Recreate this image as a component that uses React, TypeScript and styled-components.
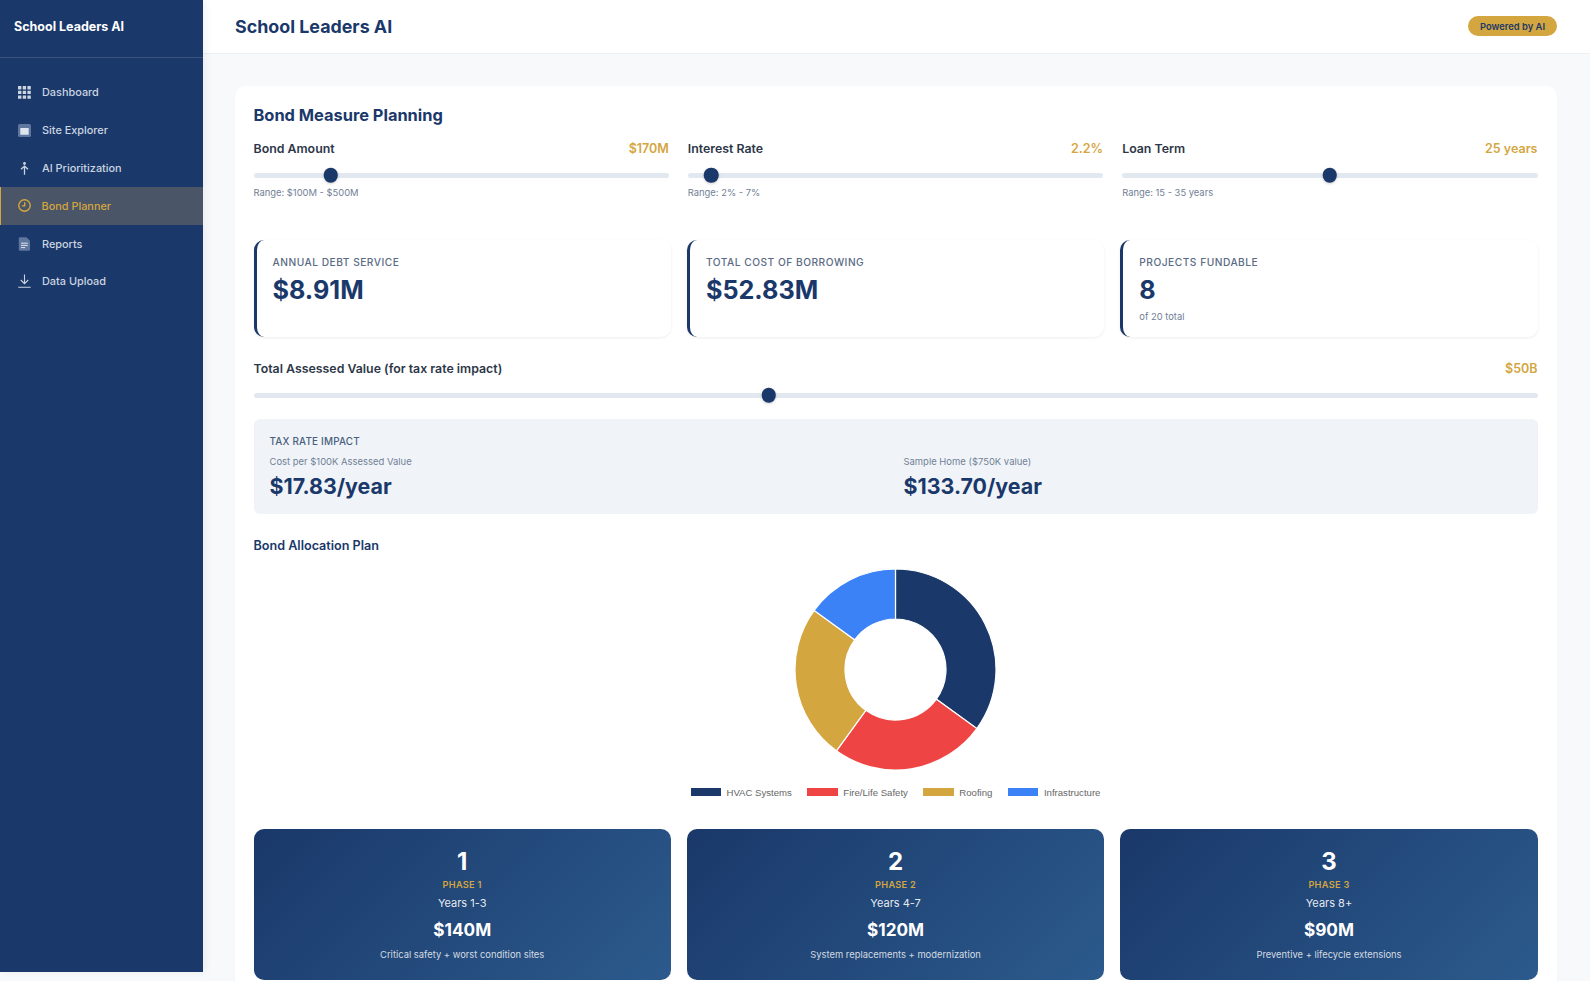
import React from "react";
import styled, { createGlobalStyle } from "styled-components";

const navy = "#1a386a";
const gold = "#d4a63f";

const Global = createGlobalStyle`
  html, body { margin: 0; padding: 0; height: 981px; overflow: hidden; background: #f7f9fb; }
  body { font-family: Inter, "Liberation Sans", sans-serif; -webkit-font-smoothing: antialiased; }
  * { box-sizing: border-box; }
`;

const Shell = styled.div`
  display: flex;
  width: 1590px;
  height: 981px;
  overflow: hidden;
  align-items: flex-start;
`;

const Sidebar = styled.aside`
  flex: 0 0 203px;
  height: 971.5px;
  background: ${navy};
  box-shadow: 2px 0 8px rgba(0, 0, 0, 0.06);
  position: relative;
  z-index: 2;
`;

const Logo = styled.div`
  height: 58px;
  padding: 0 14px 5px;
  display: flex;
  align-items: center;
  color: #fff;
  font-size: 12.5px;
  font-weight: 700;
  border-bottom: 1px solid rgba(255, 255, 255, 0.14);
`;

const Nav = styled.nav`
  padding-top: 15.6px;
  display: flex;
  flex-direction: column;
`;

const NavItem = styled.div<{ $active?: boolean }>`
  height: 37.8px;
  display: flex;
  align-items: center;
  gap: 11px;
  padding-left: ${(p) => (p.$active ? "16.5px" : "18px")};
  border-left: ${(p) => (p.$active ? `1.5px solid ${gold}` : "none")};
  background: ${(p) => (p.$active ? "#4a5568" : "transparent")};
  color: ${(p) => (p.$active ? gold : "#cbd5e0")};
  font-size: 10.9px;
  font-weight: 500;
  svg { flex: 0 0 13px; }
`;

const Main = styled.div`
  flex: 1;
  min-width: 0;
  height: 981px;
  overflow: hidden;
`;

const Header = styled.header`
  height: 54px;
  background: #fff;
  border-bottom: 1.5px solid #edf0f4;
  padding: 0 33px 0 32px;
  display: flex;
  align-items: center;
  justify-content: space-between;
`;

const HeaderTitle = styled.h1`
  margin: 0;
  color: ${navy};
  font-size: 17.85px;
  font-weight: 700;
`;

const Badge = styled.div`
  width: 89px;
  height: 20.5px;
  margin-top: -1px;
  border-radius: 11px;
  background: ${gold};
  color: ${navy};
  font-size: 9.4px;
  font-weight: 600;
  display: flex;
  align-items: center;
  justify-content: center;
`;

const Content = styled.main`
  padding: 32px 33.5px 0 31.5px;
`;

const Card = styled.section`
  background: #fff;
  border-radius: 10px;
  padding: 18px 19px 40px;
  box-shadow: 0 1px 3px rgba(0, 0, 0, 0.04);
`;

const CardTitle = styled.h2`
  margin: 0 0 13px;
  height: 23px;
  line-height: 23px;
  color: ${navy};
  font-size: 16.4px;
  font-weight: 700;
`;

const SliderRow = styled.div`
  display: grid;
  grid-template-columns: repeat(3, 1fr);
  gap: 19px;
`;

const LabelRow = styled.div`
  display: flex;
  justify-content: space-between;
  height: 18px;
  line-height: 18px;
  font-size: 12.35px;
  font-weight: 600;
  color: #2d3748;
`;

const Value = styled.span`
  color: ${gold};
  font-weight: 600;
  font-size: 12.5px;
`;

const Track = styled.div<{ $gap: number }>`
  position: relative;
  height: 5px;
  margin-top: ${(p) => p.$gap}px;
  border-radius: 3px;
  background: #e2e8f0;
`;

const Thumb = styled.div`
  position: absolute;
  top: 50%;
  width: 14.5px;
  height: 14.5px;
  border-radius: 50%;
  background: ${navy};
  transform: translate(-50%, -50%);
  box-shadow: 0 1px 3px rgba(0, 0, 0, 0.2);
`;

const RangeText = styled.div`
  margin-top: 8px;
  height: 13px;
  line-height: 13px;
  font-size: 9.4px;
  color: #718096;
`;

const StatGrid = styled.div`
  margin-top: 41px;
  display: grid;
  grid-template-columns: repeat(3, 417.4px);
  gap: 16px;
`;

const Stat = styled.div`
  height: 97px;
  padding: 15px 16px;
  background: #fff;
  border-radius: 10px;
  border-left: 3.5px solid ${navy};
  box-shadow: 0 1px 3px rgba(0, 0, 0, 0.07);
`;

const StatLabel = styled.div`
  height: 14px;
  line-height: 14px;
  font-size: 10.2px;
  font-weight: 500;
  letter-spacing: 0.5px;
  color: #5a6b85;
`;

const StatValue = styled.div`
  margin-top: 5px;
  height: 32px;
  line-height: 32px;
  font-size: 25.2px;
  font-weight: 700;
  color: ${navy};
`;

const StatSub = styled.div`
  margin-top: 4px;
  height: 13px;
  line-height: 13px;
  font-size: 9.4px;
  color: #718096;
`;

const AssessedBlock = styled.div`
  margin-top: 23px;
`;

const TaxBox = styled.div`
  margin-top: 21.5px;
  height: 95px;
  padding: 16px;
  border-radius: 6px;
  background: #f0f4f8;
`;

const TaxTitle = styled.div`
  height: 13px;
  line-height: 13px;
  font-size: 9.9px;
  font-weight: 500;
  letter-spacing: 0.2px;
  color: #4a5f7d;
`;

const TaxGrid = styled.div`
  margin-top: 7px;
  display: grid;
  grid-template-columns: 1fr 1fr;
  gap: 16px;
`;

const TaxLabel = styled.div`
  height: 13px;
  line-height: 13px;
  font-size: 9.45px;
  color: #718096;
`;

const TaxValue = styled.div`
  margin-top: 5px;
  height: 26px;
  line-height: 26px;
  font-size: 21.4px;
  font-weight: 700;
  color: ${navy};
`;

const SubHeading = styled.h3`
  margin: 24px 0 0;
  height: 16px;
  line-height: 16px;
  font-size: 12.6px;
  font-weight: 600;
  color: ${navy};
`;

const ChartBlock = styled.div`
  margin-top: 13.5px;
  display: flex;
  flex-direction: column;
  align-items: center;
`;

const Legend = styled.div`
  margin-top: 14.5px;
  display: flex;
  gap: 15.6px;
  height: 14px;
  align-items: center;
  font-family: "Liberation Sans", Arial, sans-serif;
  font-size: 9.6px;
  color: #666;
`;

const LegendItem = styled.div`
  display: flex;
  align-items: center;
  gap: 5.5px;
`;

const Swatch = styled.span<{ $color: string }>`
  width: 30.4px;
  height: 8px;
  background: ${(p) => p.$color};
`;

const PhaseGrid = styled.div`
  margin-top: 30px;
  display: grid;
  grid-template-columns: repeat(3, 417.4px);
  gap: 16px;
`;

const Phase = styled.div`
  height: 151px;
  padding-top: 17.5px;
  border-radius: 10px;
  background: linear-gradient(135deg, ${navy}, #2c5a8c);
  text-align: center;
  color: #fff;
`;

const PhaseNumber = styled.div`
  height: 30px;
  line-height: 30px;
  font-size: 24px;
  font-weight: 700;
`;

const PhaseName = styled.div`
  margin-top: 1.5px;
  height: 14px;
  line-height: 14px;
  font-size: 9.2px;
  font-weight: 600;
  letter-spacing: 0.3px;
  color: ${gold};
`;

const PhaseYears = styled.div`
  margin-top: 3px;
  height: 16px;
  line-height: 16px;
  font-size: 11px;
  color: rgba(255, 255, 255, 0.9);
`;

const PhaseAmount = styled.div`
  margin-top: 6px;
  height: 26px;
  line-height: 26px;
  font-size: 17.2px;
  font-weight: 700;
`;

const PhaseDesc = styled.div`
  margin-top: 4.5px;
  height: 14px;
  line-height: 14px;
  font-size: 9.4px;
  color: rgba(255, 255, 255, 0.8);
`;

const GridIcon = () => (
  <svg width="13" height="13" viewBox="0 0 13 13" fill="#cbd5e0">
    {[0, 4.7, 9.4].flatMap((y) =>
      [0, 4.7, 9.4].map((x) => <rect key={`${x}-${y}`} x={x} y={y} width="3.4" height="3.4" rx="0.3" />)
    )}
  </svg>
);

const SiteIcon = () => (
  <svg width="13" height="13" viewBox="0 0 13 13">
    <rect x="0" y="0" width="13" height="13" rx="1.5" fill="#5f769e" />
    <rect x="2.3" y="4" width="8.4" height="6.8" rx="0.6" fill="#dfe5ee" />
  </svg>
);

const PersonIcon = () => (
  <svg width="13" height="13" viewBox="0 0 13 13" fill="none" stroke="#cbd5e0" strokeWidth="1.3">
    <circle cx="6.5" cy="1.5" r="1.4" fill="#cbd5e0" stroke="none" />
    <path d="M6.5 3.4V12.8M3 7.2l3.5-3 3.5 3" />
  </svg>
);

const ClockIcon = () => (
  <svg width="13" height="13" viewBox="0 0 13 13" fill="none" stroke={gold} strokeWidth="1.4">
    <circle cx="6.5" cy="6.5" r="5.7" />
    <path d="M6.7 3.3V6.9H3.9" />
  </svg>
);

const ReportIcon = () => (
  <svg width="13" height="14" viewBox="0 0 13 14">
    <path d="M2 0.2H8.4L12 3.8V12.6A1.2 1.2 0 0 1 10.8 13.8H2A1.2 1.2 0 0 1 0.8 12.6V1.4A1.2 1.2 0 0 1 2 0.2Z" fill="#5f769e" />
    <path d="M3 6.2H9.8M3 8.4H9.8M3 10.6H7.2" stroke="#dfe5ee" strokeWidth="1" />
  </svg>
);

const DownloadIcon = () => (
  <svg width="13" height="14" viewBox="0 0 13 14" fill="none" stroke="#cbd5e0" strokeWidth="1.1">
    <path d="M6.5 0.4V9.6M2.8 6l3.7 3.7L10.2 6M0.3 13.2H12.7" />
  </svg>
);

const navItems: { label: string; icon: React.ReactNode; active?: boolean }[] = [
  { label: "Dashboard", icon: <GridIcon /> },
  { label: "Site Explorer", icon: <SiteIcon /> },
  { label: "AI Prioritization", icon: <PersonIcon /> },
  { label: "Bond Planner", icon: <ClockIcon />, active: true },
  { label: "Reports", icon: <ReportIcon /> },
  { label: "Data Upload", icon: <DownloadIcon /> },
];

const Slider = ({ frac, gap, inset = 7.25 }: { frac: number; gap: number; inset?: number }) => (
  <Track $gap={gap}>
    <Thumb style={{ left: `calc(${inset}px + (100% - ${inset * 2}px) * ${frac})` }} />
  </Track>
);

const sliders = [
  { label: "Bond Amount", value: "$170M", frac: 0.175, range: "Range: $100M - $500M" },
  { label: "Interest Rate", value: "2.2%", frac: 0.04, range: "Range: 2% - 7%" },
  { label: "Loan Term", value: "25 years", frac: 0.5, range: "Range: 15 - 35 years" },
];

const stats = [
  { label: "ANNUAL DEBT SERVICE", value: "$8.91M" },
  { label: "TOTAL COST OF BORROWING", value: "$52.83M" },
  { label: "PROJECTS FUNDABLE", value: "8", sub: "of 20 total" },
];

const segments = [
  { label: "HVAC Systems", color: navy, pct: 35 },
  { label: "Fire/Life Safety", color: "#ef4444", pct: 25 },
  { label: "Roofing", color: "#d4a63f", pct: 25 },
  { label: "Infrastructure", color: "#3b82f6", pct: 15 },
];

const phases = [
  { n: "1", name: "PHASE 1", years: "Years 1-3", amount: "$140M", desc: "Critical safety + worst condition sites" },
  { n: "2", name: "PHASE 2", years: "Years 4-7", amount: "$120M", desc: "System replacements + modernization" },
  { n: "3", name: "PHASE 3", years: "Years 8+", amount: "$90M", desc: "Preventive + lifecycle extensions" },
];

const polar = (r: number, pct: number) => {
  const a = (pct / 100) * Math.PI * 2;
  return [r * Math.sin(a), -r * Math.cos(a)];
};

const Donut = () => {
  let start = 0;
  const R = 100.5;
  const r = 50.5;
  return (
    <svg width="203" height="203" viewBox="-101.5 -101.5 203 203">
      {segments.map((s) => {
        const end = start + s.pct;
        const [x1, y1] = polar(R, start);
        const [x2, y2] = polar(R, end);
        const [x3, y3] = polar(r, end);
        const [x4, y4] = polar(r, start);
        const large = s.pct > 50 ? 1 : 0;
        const d = `M${x1} ${y1}A${R} ${R} 0 ${large} 1 ${x2} ${y2}L${x3} ${y3}A${r} ${r} 0 ${large} 0 ${x4} ${y4}Z`;
        start = end;
        return <path key={s.label} d={d} fill={s.color} stroke="#fff" strokeWidth="1.2" />;
      })}
    </svg>
  );
};

export default function App() {
  return (
    <Shell>
      <Global />
      <Sidebar>
        <Logo>School Leaders AI</Logo>
        <Nav>
          {navItems.map((it) => (
            <NavItem key={it.label} $active={it.active}>
              {it.icon}
              {it.label}
            </NavItem>
          ))}
        </Nav>
      </Sidebar>
      <Main>
        <Header>
          <HeaderTitle>School Leaders AI</HeaderTitle>
          <Badge>Powered by AI</Badge>
        </Header>
        <Content>
          <Card>
            <CardTitle>Bond Measure Planning</CardTitle>
            <SliderRow>
              {sliders.map((s) => (
                <div key={s.label}>
                  <LabelRow>
                    <span>{s.label}</span>
                    <Value>{s.value}</Value>
                  </LabelRow>
                  <Slider frac={s.frac} gap={14.5} />
                  <RangeText>{s.range}</RangeText>
                </div>
              ))}
            </SliderRow>
            <StatGrid>
              {stats.map((s) => (
                <Stat key={s.label}>
                  <StatLabel>{s.label}</StatLabel>
                  <StatValue>{s.value}</StatValue>
                  {s.sub && <StatSub>{s.sub}</StatSub>}
                </Stat>
              ))}
            </StatGrid>
            <AssessedBlock>
              <LabelRow>
                <span>Total Assessed Value (for tax rate impact)</span>
                <Value>$50B</Value>
              </LabelRow>
              <Slider frac={0.4} gap={15} />
            </AssessedBlock>
            <TaxBox>
              <TaxTitle>TAX RATE IMPACT</TaxTitle>
              <TaxGrid>
                <div>
                  <TaxLabel>Cost per $100K Assessed Value</TaxLabel>
                  <TaxValue>$17.83/year</TaxValue>
                </div>
                <div>
                  <TaxLabel>Sample Home ($750K value)</TaxLabel>
                  <TaxValue>$133.70/year</TaxValue>
                </div>
              </TaxGrid>
            </TaxBox>
            <SubHeading>Bond Allocation Plan</SubHeading>
            <ChartBlock>
              <Donut />
              <Legend>
                {segments.map((s) => (
                  <LegendItem key={s.label}>
                    <Swatch $color={s.color} />
                    {s.label}
                  </LegendItem>
                ))}
              </Legend>
            </ChartBlock>
            <PhaseGrid>
              {phases.map((p) => (
                <Phase key={p.n}>
                  <PhaseNumber>{p.n}</PhaseNumber>
                  <PhaseName>{p.name}</PhaseName>
                  <PhaseYears>{p.years}</PhaseYears>
                  <PhaseAmount>{p.amount}</PhaseAmount>
                  <PhaseDesc>{p.desc}</PhaseDesc>
                </Phase>
              ))}
            </PhaseGrid>
          </Card>
        </Content>
      </Main>
    </Shell>
  );
}
